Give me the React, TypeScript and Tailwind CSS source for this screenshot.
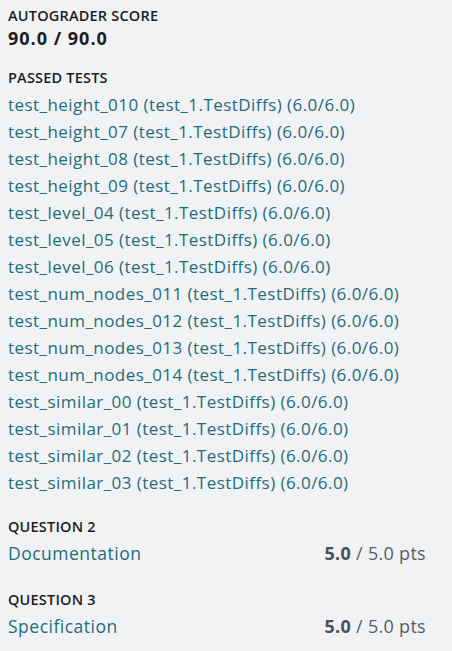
const tests = [
  'test_height_010',
  'test_height_07',
  'test_height_08',
  'test_height_09',
  'test_level_04',
  'test_level_05',
  'test_level_06',
  'test_num_nodes_011',
  'test_num_nodes_012',
  'test_num_nodes_013',
  'test_num_nodes_014',
  'test_similar_00',
  'test_similar_01',
  'test_similar_02',
  'test_similar_03',
]

const questions = [
  { title: 'QUESTION 2', name: 'Documentation', score: '5.0', max: '5.0', gap: 'mt-[22px]' },
  { title: 'QUESTION 3', name: 'Specification', score: '5.0', max: '5.0', gap: 'mt-[24px]' },
]

export default function App() {
  return (
    <div className="min-h-[651px] w-[452px] bg-[#f1f2f4] px-2 pt-[7px] font-['Open_Sans',sans-serif] text-[#1d1d1f]">
      {/* Autograder score */}
      <div className="text-[14.5px] font-semibold uppercase leading-[18px] tracking-[0.2px]">Autograder score</div>
      <div className="mt-[2px] text-[18px] font-bold leading-[22px] tracking-[1px]">90.0 / 90.0</div>

      {/* Passed tests */}
      <div className="mt-[20px] text-[14.5px] font-semibold uppercase leading-[18px] tracking-[0.2px]">Passed tests</div>
      <ul className="mt-[4px]">
        {tests.map((t) => (
          <li key={t} className="text-[17px] leading-[27px] tracking-[0.45px] text-[#1d6d7b]">
            {t} (test_1.TestDiffs) (6.0/6.0)
          </li>
        ))}
      </ul>

      {/* Questions */}
      {questions.map((q) => (
        <div key={q.title} className={q.gap}>
          <div className="text-[14.5px] font-semibold uppercase leading-[18px] tracking-[0.2px]">{q.title}</div>
          <div className="mt-[4px] flex items-center justify-between pr-[18px] leading-[27px]">
            <span className="text-[17.5px] tracking-[0.5px] text-[#1d6d7b]">{q.name}</span>
            <span className="text-[18px] tracking-[0.3px] text-[#5a5e63]">
              <span className="font-bold text-[#4d5054]">{q.score}</span> / {q.max} pts
            </span>
          </div>
        </div>
      ))}
    </div>
  )
}
